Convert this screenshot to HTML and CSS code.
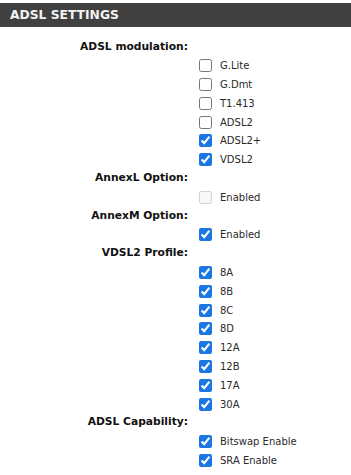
FILE: index.html
```html
<!DOCTYPE html>
<html>
<head>
<meta charset="utf-8">
<link rel="stylesheet" href="styles.css">
</head>
<body>
<div class="bar">ADSL SETTINGS</div>
<div class="form">
  <div class="label">ADSL modulation:</div>
  <label class="opt"><input type="checkbox"><span>G.Lite</span></label>
  <label class="opt"><input type="checkbox"><span>G.Dmt</span></label>
  <label class="opt"><input type="checkbox"><span>T1.413</span></label>
  <label class="opt"><input type="checkbox"><span>ADSL2</span></label>
  <label class="opt"><input type="checkbox" checked><span>ADSL2+</span></label>
  <label class="opt"><input type="checkbox" checked><span>VDSL2</span></label>
  <div class="label">AnnexL Option:</div>
  <label class="opt"><input type="checkbox" disabled><span>Enabled</span></label>
  <div class="label">AnnexM Option:</div>
  <label class="opt"><input type="checkbox" checked><span>Enabled</span></label>
  <div class="label">VDSL2 Profile:</div>
  <label class="opt"><input type="checkbox" checked><span>8A</span></label>
  <label class="opt"><input type="checkbox" checked><span>8B</span></label>
  <label class="opt"><input type="checkbox" checked><span>8C</span></label>
  <label class="opt"><input type="checkbox" checked><span>8D</span></label>
  <label class="opt"><input type="checkbox" checked><span>12A</span></label>
  <label class="opt"><input type="checkbox" checked><span>12B</span></label>
  <label class="opt"><input type="checkbox" checked><span>17A</span></label>
  <label class="opt"><input type="checkbox" checked><span>30A</span></label>
  <div class="label">ADSL Capability:</div>
  <label class="opt"><input type="checkbox" checked><span>Bitswap Enable</span></label>
  <label class="opt"><input type="checkbox" checked><span>SRA Enable</span></label>
</div>
</body>
</html>
```

FILE: styles.css
```css
html, body {
  margin: 0;
  padding: 0;
  background: #fff;
}
body {
  font-family: "DejaVu Sans", Verdana, sans-serif;
  color: #222;
}
.bar {
  margin-top: 3px;
  height: 24px;
  line-height: 24px;
  background: #404040;
  color: #f2f2f2;
  font-weight: bold;
  font-size: 12.3px;
  padding-left: 10px;
}
.form {
  display: flex;
  flex-direction: column;
  padding-top: 10.5px;
}
.label {
  width: 188px;
  text-align: right;
  font-weight: bold;
  font-size: 10.7px;
  height: 18.8px;
  line-height: 18.8px;
  color: #111;
}
.opt {
  display: flex;
  align-items: center;
  height: 18.8px;
  padding-left: 199px;
  font-size: 10px;
  color: #2a2a2a;
}
.opt input {
  margin: 0 8px 0 0;
  width: 13px;
  height: 13px;
  accent-color: #1a76e3;
}
```
